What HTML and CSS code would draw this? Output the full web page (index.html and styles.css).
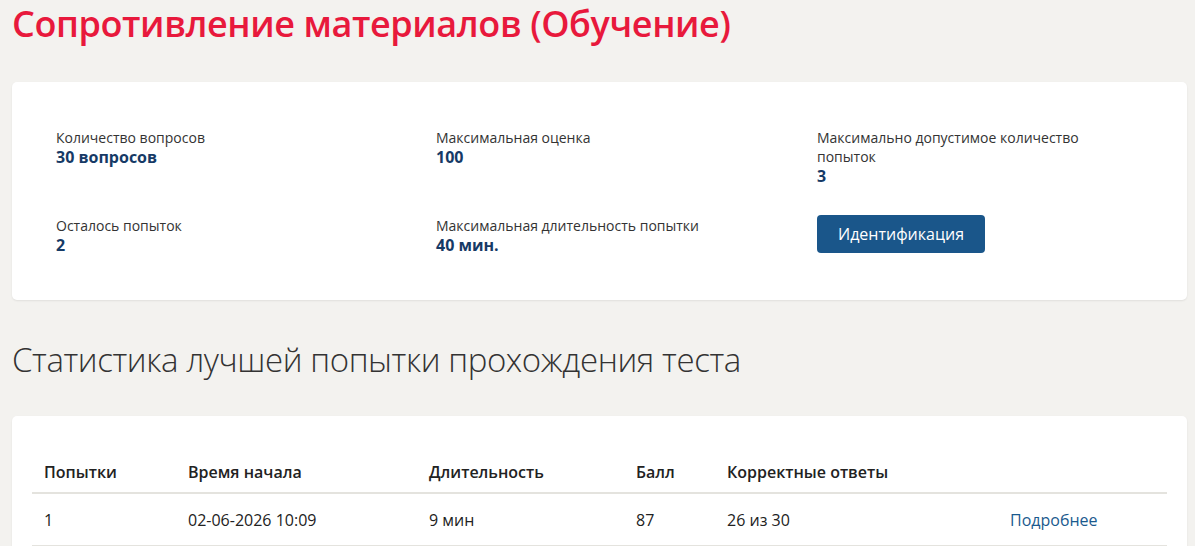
FILE: index.html
```html
<!DOCTYPE html>
<html lang="ru">
<head>
    <meta charset="UTF-8">
    <meta name="viewport" content="width=device-width, initial-scale=1.0">
    <title>Сопротивление материалов (Обучение)</title>
    <link rel="stylesheet" href="styles.css">
</head>
<body>
    <h1 class="page-title">Сопротивление материалов (Обучение)</h1>

    <div class="card info-card">
        <div class="info-grid">
            <div class="info-item">
                <div class="info-label">Количество вопросов</div>
                <div class="info-value">30 вопросов</div>
            </div>
            <div class="info-item">
                <div class="info-label">Максимальная оценка</div>
                <div class="info-value">100</div>
            </div>
            <div class="info-item">
                <div class="info-label">Максимально допустимое количество попыток</div>
                <div class="info-value">3</div>
            </div>
            <div class="info-item">
                <div class="info-label">Осталось попыток</div>
                <div class="info-value">2</div>
            </div>
            <div class="info-item">
                <div class="info-label">Максимальная длительность попытки</div>
                <div class="info-value">40 мин.</div>
            </div>
            <div class="info-item">
                <button class="btn-primary">Идентификация</button>
            </div>
        </div>
    </div>

    <h2 class="section-title">Статистика лучшей попытки прохождения теста</h2>

    <div class="card table-card">
        <table class="stats">
            <thead>
                <tr>
                    <th class="col-try">Попытки</th>
                    <th class="col-start">Время начала</th>
                    <th class="col-dur">Длительность</th>
                    <th class="col-score">Балл</th>
                    <th class="col-correct">Корректные ответы</th>
                    <th></th>
                </tr>
            </thead>
            <tbody>
                <tr>
                    <td>1</td>
                    <td>02-06-2026 10:09</td>
                    <td>9 мин</td>
                    <td>87</td>
                    <td>26 из 30</td>
                    <td><a href="#" class="more-link">Подробнее</a></td>
                </tr>
            </tbody>
        </table>
    </div>
</body>
</html>
```

FILE: styles.css
```css
body {
    margin: 0;
    padding: 0 8px 0 12px;
    background: #f3f2ef;
    font-family: "Open Sans", "Noto Sans", sans-serif;
    color: #222;
    overflow: hidden;
}

.page-title {
    margin: 0;
    padding-top: 2px;
    height: 80px;
    font-size: 36px;
    line-height: 44px;
    font-weight: 600;
    color: #e8193c;
    letter-spacing: -0.4px;
}

.card {
    background: #fff;
    border-radius: 5px;
    box-shadow: 0 1px 2px rgba(0, 0, 0, 0.08);
}

.info-card {
    height: 218px;
    box-sizing: border-box;
    padding: 46px 44px 0 44px;
}

.info-grid {
    display: grid;
    grid-template-columns: 380px 381px 300px;
    row-gap: 29px;
}

.info-label {
    font-size: 14px;
    line-height: 19px;
    color: #333;
}

.info-value {
    font-size: 16px;
    line-height: 21px;
    font-weight: 700;
    color: #163a66;
}

.btn-primary {
    margin-top: -1px;
    width: 168px;
    height: 38px;
    border: none;
    border-radius: 4px;
    background: #1a568a;
    color: #fff;
    font-family: inherit;
    font-size: 16px;
    cursor: pointer;
}

.section-title {
    margin: 0;
    padding-top: 40px;
    height: 76px;
    font-size: 33px;
    line-height: 40px;
    font-weight: 300;
    color: #333;
    letter-spacing: -0.4px;
}

.table-card {
    padding: 36px 20px 0 20px;
    height: 130px;
}

.stats {
    width: 100%;
    border-collapse: collapse;
}

.stats th,
.stats td {
    text-align: left;
    padding: 0 0 0 12px;
    font-size: 16px;
    border-bottom: 2px solid #e4e3de;
}

.stats th {
    height: 40px;
    font-weight: 600;
    color: #222;
}

.stats td {
    height: 51px;
    color: #222;
}

.col-try { width: 132px; }
.col-start { width: 229px; }
.col-dur { width: 195px; }
.col-score { width: 79px; }
.col-correct { width: 271px; }

.more-link {
    color: #1a5a8e;
    text-decoration: none;
}
```
